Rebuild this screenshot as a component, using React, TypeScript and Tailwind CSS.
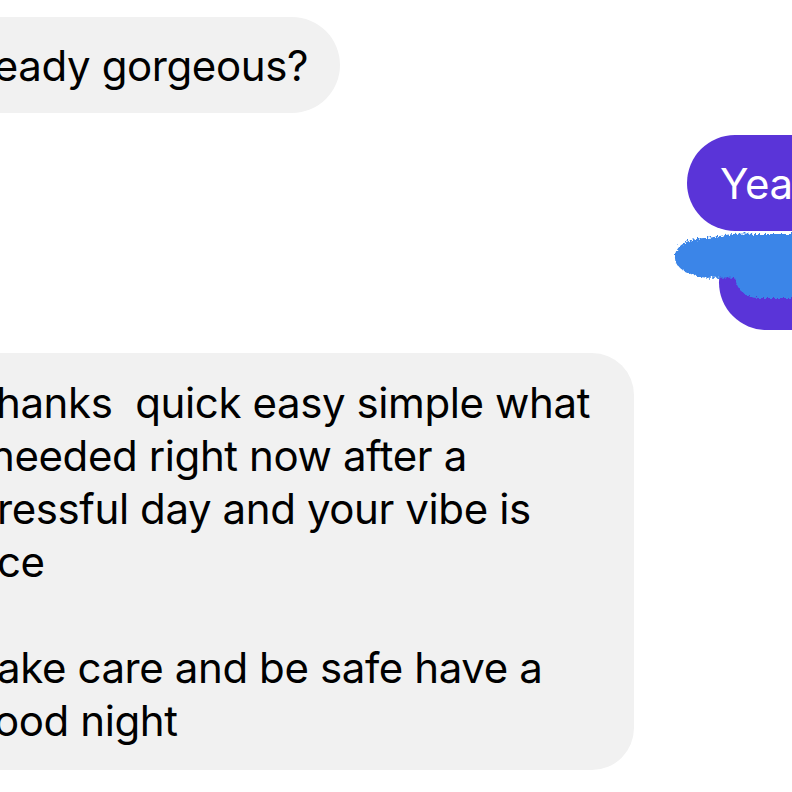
const font = { fontFamily: "Inter, 'Noto Sans', sans-serif" };

// the screenshot is cropped on the left, so each line starts mid-word;
// the cropped start of the word sits just past the left edge
const lines = [
  { cut: "T", text: "hanks  quick easy simple what", indent: "-ml-[4px]" },
  { cut: "I ", text: "needed right now after a", indent: "-ml-[10px]" },
  { cut: "st", text: "ressful day and your vibe is", indent: "-ml-[3px]" },
  { cut: "ni", text: "ce", indent: "-ml-[3px]" },
  { cut: "", text: " ", indent: "ml-[0px]" },
  { cut: "T", text: "ake care and be safe have a", indent: "-ml-[3px]" },
  { cut: "g", text: "ood night", indent: "-ml-[6px]" },
];

function Scribble() {
  return (
    <svg
      className="pointer-events-none absolute left-[-54px] top-[-9px]"
      width="136"
      height="82"
      viewBox="0 0 136 82"
    >
      <defs>
        <filter id="rough" x="-10%" y="-20%" width="120%" height="140%">
          <feTurbulence type="fractalNoise" baseFrequency="0.5" numOctaves="2" seed="7" />
          <feDisplacementMap in="SourceGraphic" scale="7" />
          <feGaussianBlur stdDeviation="0.6" />
        </filter>
      </defs>
      <path
        filter="url(#rough)"
        fill="#3a85e8"
        d="M10 30 C 11 18, 26 12, 42 12 C 56 10, 70 6, 90 8 L 138 8 L 138 72 L 94 72 C 80 72, 72 64, 70 52 C 58 50, 46 54, 32 50 C 18 46, 9 40, 10 30 Z"
      />
    </svg>
  );
}

export default function App() {
  return (
    <div
      className="flex h-[792px] w-[792px] flex-col overflow-hidden bg-white text-[42px] leading-[53px] tracking-[-0.4px] text-black"
      style={font}
    >
      <div className="ml-[-260px] mt-[17px] flex h-[96px] w-[600px] shrink-0 items-center justify-end whitespace-nowrap rounded-full bg-[#f1f1f1] pr-[32px]">
        Ready gorgeous?
      </div>

      <div className="mr-[-120px] mt-[22px] flex h-[96px] w-[225px] shrink-0 items-center self-end whitespace-nowrap rounded-full bg-[#5a34d8] pl-[33px] text-white">
        Yeah
      </div>

      <div className="relative mr-[-120px] mt-[4px] h-[95px] w-[193px] shrink-0 self-end rounded-full bg-[#5a34d8]">
        <Scribble />
      </div>

      <div className="ml-[-60px] mt-[23px] w-[694px] shrink-0 overflow-hidden rounded-[42px] bg-[#f1f1f1] py-[23px] pl-[60px]">
        {lines.map((line, i) => (
          <div key={i} className={`${line.indent} whitespace-pre`}>
            <span className="relative">
              <span className="absolute right-full mr-[16px]">{line.cut}</span>
              {line.text}
            </span>
          </div>
        ))}
      </div>
    </div>
  );
}
